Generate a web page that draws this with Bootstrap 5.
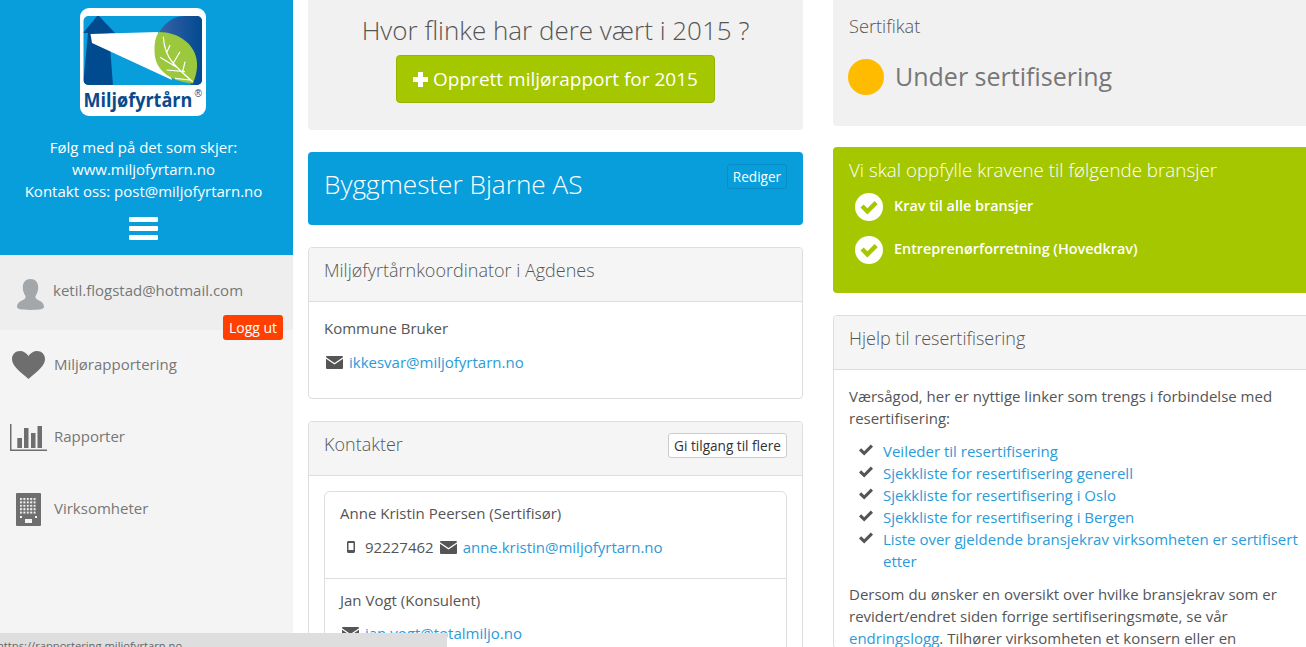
<!DOCTYPE html>
<html lang="nb">
<head>
  <meta charset="UTF-8">
  <title>Miljøfyrtårn</title>
  <link href="https://cdn.jsdelivr.net/npm/bootstrap@5.3.0/dist/css/bootstrap.min.css" rel="stylesheet">
  <style>
    html, body { height: 647px; overflow: hidden; }
    body { font-family: "Open Sans", "Liberation Sans", sans-serif; font-size: 15px; line-height: 22px; color: #555; background: #fff; }
    a { color: #2a9bd8; text-decoration: none; }
    .page-wrap { height: 647px; width: 1340px; overflow: hidden; }
    .side-col { width: 293px; height: 647px; background: #f4f4f4; flex: none; }
    .side-top { height: 255px; background: #089ddb; color: #fff; padding: 8px 6px 0 0; }
    .side-logo { display: block; width: 126px; height: 108px; margin: 0 0 20px 80px; }
    .burger { width: 29px; margin: 15px 0 0 129px; }
    .burger span { display: block; height: 5px; background: #fff; border-radius: 1px; margin-bottom: 4px; }
    .side-user { height: 75px; background: #eee; color: #777; padding: 24px 0 0 17px; position: relative; margin-bottom: -1px; }
    .side-user svg { width: 27px; height: 31px; flex: none; }
    .user-mail { margin: 0 0 0 9px; }
    .logout-btn { position: absolute; left: 223px; top: 60px; width: 60px; height: 25px; padding: 0; background: #ff4000; border: 0; color: #fff; font-size: 14px; line-height: 26px; border-radius: 3px; }
    .side-link { color: #777; height: 72px; }
    .side-link .link-label { padding-bottom: 2px; }
    .side-link:last-child .link-label { padding-bottom: 3px; }
    .side-icon { width: 54px; flex: none; display: flex; justify-content: center; padding-left: 3px; }
    .mid-col { width: 495px; flex: none; margin-left: 15px; }
    .right-col { width: 482px; flex: none; margin-left: 30px; }
    .box-grey { background: #f1f1f1; border-radius: 0 0 4px 4px; }
    .ask-box { height: 130px; margin-bottom: 22px; text-align: center; padding-top: 12px; }
    .ask-title { font-size: 26px; font-weight: 300; line-height: 36px; color: #555; margin: 0 0 7px; }
    .create-btn { width: 319px; height: 48px; background: #a5c700; border: 1px solid #98b400; color: #fff; font-size: 19px; padding: 0; border-radius: 4px; line-height: 47px; }
    .create-btn:hover { background: #a5c700; border-color: #98b400; color: #fff; }
    .plus-ico { vertical-align: -1px; margin-right: 5px; }
    .company-box { height: 73px; background: #089ddb; color: #fff; border-radius: 4px; margin-bottom: 22px; padding: 11px 16px; }
    .company-title { font-size: 26.2px; font-weight: 300; line-height: 42px; margin: 0; }
    .edit-btn { width: 60px; height: 25px; padding: 0; font-size: 13.6px; line-height: 24px; color: #fff; background: transparent; border: 1px solid #0a8cc4; border-radius: 3px; margin-top: 1px; }
    .pnl { border-color: #ddd; border-radius: 4px; margin-bottom: 22px; color: #555; }
    .pnl .card-header { background: #f5f5f5; border-color: #ddd; height: 54px; padding: 9px 15px; }
    .pnl-title { font-size: 18px; font-weight: 300; line-height: 26px; margin: 0; color: #555; }
    .pnl .card-body { padding: 15px; }
    .koord-body { height: 96px; }
    .access-btn { height: 25px; width: 119px; padding: 0; font-size: 13.6px; line-height: 23px; background: #fff; border: 1px solid #ccc; color: #333; border-radius: 3px; margin-top: 2px; }
    .contact-line { margin-top: 12px; }
    .ico-mail { width: 17px; height: 13px; margin: 0 6px 0 2px; flex: none; }
    .ico-phone { width: 8px; height: 12px; margin: 0 10px 0 7px; flex: none; }
    .phone-mail { margin-left: 6px; }
    .contact-list .list-group-item { padding: 10px 15px 0; border-color: #ddd; color: #555; }
    .contact-list .list-group-item:first-child { height: 88px; }
    .contact-list .list-group-item:last-child { height: 80px; }
    .contact-list .list-group-item:last-child .contact-line { margin-top: 11px; }
    .contacts-pnl .card-body { height: 200px; }
    .cert-box { height: 126px; margin-bottom: 21px; padding: 13px 15px; }
    .cert-label { font-size: 18.2px; font-weight: 300; line-height: 26px; margin: 0 0 19px 1px; color: #555; }
    .cert-dot { width: 36px; height: 36px; background: #ffbb00; border-radius: 50%; flex: none; }
    .cert-state { font-size: 25px; color: #777; line-height: 36px; margin-left: 11px; padding-bottom: 2px; }
    .trade-box { height: 146px; background: #a5c700; color: #fff; border-radius: 4px; margin-bottom: 22px; padding: 10px 15px; }
    .trade-title { font-size: 18.8px; font-weight: 300; line-height: 26px; margin: 0 0 2px 1px; }
    .trade-row { height: 43px; padding-left: 7px; font-weight: 600; font-size: 14.4px; }
    .trade-row span { padding-bottom: 2px; }
    .trade-row svg { width: 28px; height: 28px; margin-right: 11px; flex: none; }
    .help-list { list-style: none; padding: 0 0 0 34px; margin: 0 0 11px; position: relative; }
    .help-list li { position: relative; }
    .help-list svg { position: absolute; left: -24px; top: 4px; width: 14px; height: 12px; }
    .help-text { margin: 0 0 11px; }
    .help-pnl .card-body { height: 278px; overflow: hidden; }
    .status-strip { position: absolute; left: 0; bottom: 0; width: 447px; height: 14px; background: #dedede; color: #666; font-size: 11.2px; line-height: 26px; overflow: hidden; white-space: nowrap; text-indent: -3px; }
  </style>
</head>
<body>
<svg width="0" height="0" class="position-absolute">
  <symbol id="i-mail" viewBox="0 0 17 13"><path d="M1 0H16A1 1 0 0 1 17 1V1.300L8.500 6.900 0 1.300V1A1 1 0 0 1 1 0zM0 2.800 8.500 8.400 17 2.800V12A1 1 0 0 1 16 13H1A1 1 0 0 1 0 12z" fill="#555"/></symbol>
  <symbol id="i-check" viewBox="0 0 14 12"><path d="M0 6.400 2.200 4.200 5.200 7.200 11.800 .6 14 2.800 5.200 11.600z" fill="#555"/></symbol>
  <symbol id="i-okc" viewBox="0 0 28 28"><circle cx="14" cy="14" r="14" fill="#fff"/><path d="M5.500 14.600 8.600 11.500 12.400 15.300 19.600 8.100 22.700 11.200 12.400 21.500z" fill="#a5c700"/></symbol>
</svg>
<div class="page-wrap d-flex">
  <aside class="side-col">
    <div class="side-top text-center">
      <svg class="side-logo" viewBox="0 0 126 108">
        <defs>
          <clipPath id="logo-clip"><rect x="3.500" y="8" width="118.500" height="69" rx="5"/></clipPath>
          <linearGradient id="logo-blue" x1="0" y1="0" x2="1" y2="0"><stop offset="0" stop-color="#3a62a8"/><stop offset="1" stop-color="#004a8f"/></linearGradient>
        </defs>
        <rect width="126" height="108" rx="9" fill="#fff"/>
        <g clip-path="url(#logo-clip)">
          <rect x="3" y="8" width="120" height="70" fill="#089ddb"/>
          <path d="M78 26C84 16 92 8.500 104 8H123V78H112z" fill="url(#logo-blue)"/>
          <path d="M18 7 35 25H29L33 78H3L8 25H3z" fill="#004a8f"/>
          <path d="M10.500 26 78 24 92 72 12 35z" fill="#fff"/>
          <path d="M79 24C98 24 116 36 117 55 117.500 63 115 70 113 75.500 96 74 74 66 74.500 42 74.500 33 76 28 79 24z" fill="#9bc83c"/>
          <path d="M83.300 28.700C84 40 87 48 93 55 99 62 106 68 112.700 73.700M100 43.700 93.300 55M90 37 86.700 44.700M105 53.700 102.700 63.700M80 49.300 98.300 60.300M86.700 62 105 63.700M95 70.300 110 72" stroke="#fff" stroke-width="1.200" fill="none"/>
        </g>
        <text transform="translate(3.500 99) scale(.96 1)" font-family="Open Sans, Liberation Sans, sans-serif" font-weight="700" font-size="18.800" fill="#0a4a8c">Miljøfyrtårn</text>
        <text x="114.500" y="89" font-family="Liberation Sans, sans-serif" font-size="10" fill="#0a4a8c">®</text>
      </svg>
      <div>Følg med på det som skjer:</div>
      <div>www.miljofyrtarn.no</div>
      <div>Kontakt oss: post@miljofyrtarn.no</div>
      <div class="burger"><span></span><span></span><span></span></div>
    </div>
    <div class="side-user d-flex align-items-start">
      <svg viewBox="0 0 28 32"><path d="M14 0c5 0 8 3.500 8 9 0 3-1 5.500-2.500 8-.7 1.500-.5 3 1 4 2.500 1.500 7.500 3 7.500 8 0 2-4 3-14 3S0 31 0 29c0-5 5-6.500 7.500-8 1.500-1 1.700-2.500 1-4C7 14.500 6 12 6 9c0-5.500 3-9 8-9z" fill="#a4a7a9"/></svg>
      <span class="user-mail">ketil.flogstad@hotmail.com</span>
      <button class="btn logout-btn" type="button">Logg ut</button>
    </div>
    <a class="side-link d-flex align-items-center" href="#">
      <span class="side-icon"><svg width="33" height="28" viewBox="0 0 33 28"><path d="M16.500 28C6 19 0 14.500 0 8 0 3.500 3.500 0 8 0c3.500 0 6.500 2 8.500 5C18.500 2 21.500 0 25 0c4.500 0 8 3.500 8 8 0 6.500-6 11-16.500 20z" fill="#6e6e6e"/></svg></span>
      <span class="link-label">Miljørapportering</span>
    </a>
    <a class="side-link d-flex align-items-center" href="#">
      <span class="side-icon"><svg width="37" height="27" viewBox="0 0 37 27"><path d="M0 0H1.500V25.500H37V27H0zM7.300 14H12V24H7.300zM14 4H18.500V24H14zM21 9H25.500V24H21zM27.500 2H32V24H27.500z" fill="#6e6e6e"/></svg></span>
      <span class="link-label">Rapporter</span>
    </a>
    <a class="side-link d-flex align-items-center" href="#">
      <span class="side-icon"><svg width="25" height="33" viewBox="0 0 25 33">
        <defs><pattern id="win" x="4" y="5" width="3.400" height="3.400" patternUnits="userSpaceOnUse"><rect width="2" height="2" fill="#f4f4f4"/></pattern></defs>
        <rect width="25" height="33" rx="1" fill="#6e6e6e"/>
        <rect x="4" y="5" width="17" height="17" fill="url(#win)"/>
        <path d="M4 23H6V25H4zM19 23H21V25H19zM9 26H16V30H9z" fill="#f4f4f4"/>
      </svg></span>
      <span class="link-label">Virksomheter</span>
    </a>
  </aside>

  <div class="mid-col">
    <div class="box-grey ask-box">
      <h2 class="ask-title">Hvor flinke har dere vært i 2015 ?</h2>
      <button class="btn create-btn" type="button"><svg class="plus-ico" width="15" height="15" viewBox="0 0 15 15"><path d="M5 0H10V5H15V10H10V15H5V10H0V5H5z" fill="#fff"/></svg>Opprett miljørapport for 2015</button>
    </div>
    <div class="company-box d-flex justify-content-between align-items-start">
      <h1 class="company-title">Byggmester Bjarne AS</h1>
      <button class="btn edit-btn" type="button">Rediger</button>
    </div>
    <div class="card pnl">
      <div class="card-header"><h3 class="pnl-title">Miljøfyrtårnkoordinator i Agdenes</h3></div>
      <div class="card-body koord-body">
        <div>Kommune Bruker</div>
        <div class="contact-line d-flex align-items-center"><svg class="ico-mail"><use href="#i-mail"/></svg><a href="#">ikkesvar@miljofyrtarn.no</a></div>
      </div>
    </div>
    <div class="card pnl contacts-pnl">
      <div class="card-header d-flex justify-content-between align-items-start">
        <h3 class="pnl-title">Kontakter</h3>
        <button class="btn access-btn" type="button">Gi tilgang til flere</button>
      </div>
      <div class="card-body">
        <ul class="list-group contact-list">
          <li class="list-group-item">
            <div>Anne Kristin Peersen (Sertifisør)</div>
            <div class="contact-line d-flex align-items-center">
              <svg class="ico-phone" viewBox="0 0 8 12"><path fill-rule="evenodd" d="M1.500 0H6.500C7.300 0 8 .7 8 1.500V10.500C8 11.300 7.300 12 6.500 12H1.500C.7 12 0 11.300 0 10.500V1.500C0 .7.700 0 1.500 0zM1.500 2V9H6.500V2z" fill="#555"/></svg>
              <span>92227462</span>
              <svg class="ico-mail phone-mail"><use href="#i-mail"/></svg><a href="#">anne.kristin@miljofyrtarn.no</a>
            </div>
          </li>
          <li class="list-group-item">
            <div>Jan Vogt (Konsulent)</div>
            <div class="contact-line d-flex align-items-center"><svg class="ico-mail"><use href="#i-mail"/></svg><a href="#">jan.vogt@totalmiljo.no</a></div>
          </li>
        </ul>
      </div>
    </div>
  </div>

  <div class="right-col">
    <div class="box-grey cert-box">
      <h3 class="cert-label">Sertifikat</h3>
      <div class="d-flex align-items-center"><span class="cert-dot"></span><span class="cert-state">Under sertifisering</span></div>
    </div>
    <div class="trade-box">
      <h3 class="trade-title">Vi skal oppfylle kravene til følgende bransjer</h3>
      <div class="trade-row d-flex align-items-center"><svg><use href="#i-okc"/></svg><span>Krav til alle bransjer</span></div>
      <div class="trade-row d-flex align-items-center"><svg><use href="#i-okc"/></svg><span>Entreprenørforretning (Hovedkrav)</span></div>
    </div>
    <div class="card pnl help-pnl">
      <div class="card-header"><h3 class="pnl-title">Hjelp til resertifisering</h3></div>
      <div class="card-body">
        <p class="help-text">Værsågod, her er nyttige linker som trengs i forbindelse med resertifisering:</p>
        <ul class="help-list">
          <li><svg><use href="#i-check"/></svg><a href="#">Veileder til resertifisering</a></li>
          <li><svg><use href="#i-check"/></svg><a href="#">Sjekkliste for resertifisering generell</a></li>
          <li><svg><use href="#i-check"/></svg><a href="#">Sjekkliste for resertifisering i Oslo</a></li>
          <li><svg><use href="#i-check"/></svg><a href="#">Sjekkliste for resertifisering i Bergen</a></li>
          <li><svg><use href="#i-check"/></svg><a href="#">Liste over gjeldende bransjekrav virksomheten er sertifisert etter</a></li>
        </ul>
        <p class="help-text">Dersom du ønsker en oversikt over hvilke bransjekrav som er revidert/endret siden forrige sertifiseringsmøte, se vår <a href="#">endringslogg</a>. Tilhører virksomheten et konsern eller en</p>
      </div>
    </div>
  </div>
</div>
<div class="status-strip">https://rapportering.miljofyrtarn.no</div>
</body>
</html>
